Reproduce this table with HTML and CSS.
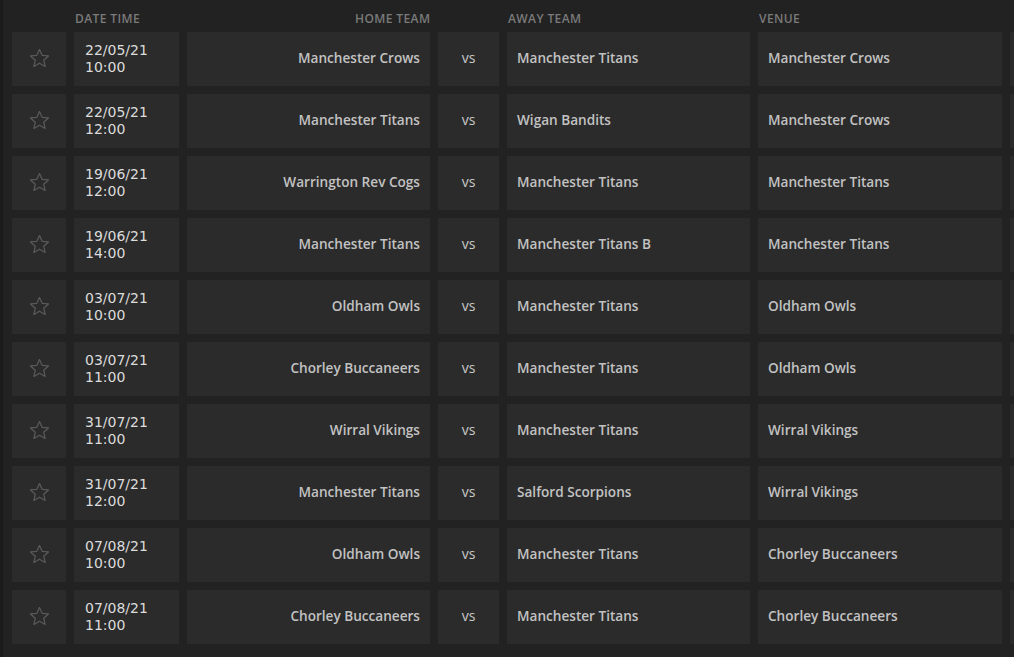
FILE: index.html
```html
<!DOCTYPE html>
<html>
<head>
<meta charset="utf-8">
<link rel="stylesheet" href="styles.css">
</head>
<body>
<div class="table">
  <div class="head"></div>
  <div class="head">Date Time</div>
  <div class="head right">Home Team</div>
  <div class="head"></div>
  <div class="head">Away Team</div>
  <div class="head">Venue</div>
  <div class="head"></div>

  <div class="cell star"><svg viewBox="0 0 24 24" width="23" height="23"><path d="M12 2.6l2.75 6.1 6.65.62-5.03 4.42 1.48 6.52L12 16.9l-5.85 3.36 1.48-6.52L2.6 9.32l6.65-.62z" fill="none" stroke="#5a5a5a" stroke-width="1.3" stroke-linejoin="round"/></svg></div>
  <div class="cell date">22/05/21<br>10:00</div>
  <div class="cell team home">Manchester Crows</div>
  <div class="cell vs">vs</div>
  <div class="cell team">Manchester Titans</div>
  <div class="cell team">Manchester Crows</div>
  <div class="cell extra"></div>

  <div class="cell star"><svg viewBox="0 0 24 24" width="23" height="23"><path d="M12 2.6l2.75 6.1 6.65.62-5.03 4.42 1.48 6.52L12 16.9l-5.85 3.36 1.48-6.52L2.6 9.32l6.65-.62z" fill="none" stroke="#5a5a5a" stroke-width="1.3" stroke-linejoin="round"/></svg></div>
  <div class="cell date">22/05/21<br>12:00</div>
  <div class="cell team home">Manchester Titans</div>
  <div class="cell vs">vs</div>
  <div class="cell team">Wigan Bandits</div>
  <div class="cell team">Manchester Crows</div>
  <div class="cell extra"></div>

  <div class="cell star"><svg viewBox="0 0 24 24" width="23" height="23"><path d="M12 2.6l2.75 6.1 6.65.62-5.03 4.42 1.48 6.52L12 16.9l-5.85 3.36 1.48-6.52L2.6 9.32l6.65-.62z" fill="none" stroke="#5a5a5a" stroke-width="1.3" stroke-linejoin="round"/></svg></div>
  <div class="cell date">19/06/21<br>12:00</div>
  <div class="cell team home">Warrington Rev Cogs</div>
  <div class="cell vs">vs</div>
  <div class="cell team">Manchester Titans</div>
  <div class="cell team">Manchester Titans</div>
  <div class="cell extra"></div>

  <div class="cell star"><svg viewBox="0 0 24 24" width="23" height="23"><path d="M12 2.6l2.75 6.1 6.65.62-5.03 4.42 1.48 6.52L12 16.9l-5.85 3.36 1.48-6.52L2.6 9.32l6.65-.62z" fill="none" stroke="#5a5a5a" stroke-width="1.3" stroke-linejoin="round"/></svg></div>
  <div class="cell date">19/06/21<br>14:00</div>
  <div class="cell team home">Manchester Titans</div>
  <div class="cell vs">vs</div>
  <div class="cell team">Manchester Titans B</div>
  <div class="cell team">Manchester Titans</div>
  <div class="cell extra"></div>

  <div class="cell star"><svg viewBox="0 0 24 24" width="23" height="23"><path d="M12 2.6l2.75 6.1 6.65.62-5.03 4.42 1.48 6.52L12 16.9l-5.85 3.36 1.48-6.52L2.6 9.32l6.65-.62z" fill="none" stroke="#5a5a5a" stroke-width="1.3" stroke-linejoin="round"/></svg></div>
  <div class="cell date">03/07/21<br>10:00</div>
  <div class="cell team home">Oldham Owls</div>
  <div class="cell vs">vs</div>
  <div class="cell team">Manchester Titans</div>
  <div class="cell team">Oldham Owls</div>
  <div class="cell extra"></div>

  <div class="cell star"><svg viewBox="0 0 24 24" width="23" height="23"><path d="M12 2.6l2.75 6.1 6.65.62-5.03 4.42 1.48 6.52L12 16.9l-5.85 3.36 1.48-6.52L2.6 9.32l6.65-.62z" fill="none" stroke="#5a5a5a" stroke-width="1.3" stroke-linejoin="round"/></svg></div>
  <div class="cell date">03/07/21<br>11:00</div>
  <div class="cell team home">Chorley Buccaneers</div>
  <div class="cell vs">vs</div>
  <div class="cell team">Manchester Titans</div>
  <div class="cell team">Oldham Owls</div>
  <div class="cell extra"></div>

  <div class="cell star"><svg viewBox="0 0 24 24" width="23" height="23"><path d="M12 2.6l2.75 6.1 6.65.62-5.03 4.42 1.48 6.52L12 16.9l-5.85 3.36 1.48-6.52L2.6 9.32l6.65-.62z" fill="none" stroke="#5a5a5a" stroke-width="1.3" stroke-linejoin="round"/></svg></div>
  <div class="cell date">31/07/21<br>11:00</div>
  <div class="cell team home">Wirral Vikings</div>
  <div class="cell vs">vs</div>
  <div class="cell team">Manchester Titans</div>
  <div class="cell team">Wirral Vikings</div>
  <div class="cell extra"></div>

  <div class="cell star"><svg viewBox="0 0 24 24" width="23" height="23"><path d="M12 2.6l2.75 6.1 6.65.62-5.03 4.42 1.48 6.52L12 16.9l-5.85 3.36 1.48-6.52L2.6 9.32l6.65-.62z" fill="none" stroke="#5a5a5a" stroke-width="1.3" stroke-linejoin="round"/></svg></div>
  <div class="cell date">31/07/21<br>12:00</div>
  <div class="cell team home">Manchester Titans</div>
  <div class="cell vs">vs</div>
  <div class="cell team">Salford Scorpions</div>
  <div class="cell team">Wirral Vikings</div>
  <div class="cell extra"></div>

  <div class="cell star"><svg viewBox="0 0 24 24" width="23" height="23"><path d="M12 2.6l2.75 6.1 6.65.62-5.03 4.42 1.48 6.52L12 16.9l-5.85 3.36 1.48-6.52L2.6 9.32l6.65-.62z" fill="none" stroke="#5a5a5a" stroke-width="1.3" stroke-linejoin="round"/></svg></div>
  <div class="cell date">07/08/21<br>10:00</div>
  <div class="cell team home">Oldham Owls</div>
  <div class="cell vs">vs</div>
  <div class="cell team">Manchester Titans</div>
  <div class="cell team">Chorley Buccaneers</div>
  <div class="cell extra"></div>

  <div class="cell star"><svg viewBox="0 0 24 24" width="23" height="23"><path d="M12 2.6l2.75 6.1 6.65.62-5.03 4.42 1.48 6.52L12 16.9l-5.85 3.36 1.48-6.52L2.6 9.32l6.65-.62z" fill="none" stroke="#5a5a5a" stroke-width="1.3" stroke-linejoin="round"/></svg></div>
  <div class="cell date">07/08/21<br>11:00</div>
  <div class="cell team home">Chorley Buccaneers</div>
  <div class="cell vs">vs</div>
  <div class="cell team">Manchester Titans</div>
  <div class="cell team">Chorley Buccaneers</div>
  <div class="cell extra"></div>
</div>
</body>
</html>
```
FILE: styles.css
```css
html, body {
  margin: 0;
  padding: 0;
  background: #222222;
  height: 100%;
  overflow: hidden;
}
body {
  border-left: 3px solid #1b1b1b;
  font-family: "Open Sans", "DejaVu Sans", sans-serif;
}
.table {
  display: grid;
  grid-template-columns: 54px 105px 243px 61px 243px 244px 1fr;
  grid-template-rows: 24px;
  grid-auto-rows: 54px;
  column-gap: 8px;
  row-gap: 8px;
  padding-left: 9px;
}
.head {
  font-size: 12px;
  letter-spacing: 0.4px;
  text-transform: uppercase;
  color: #7a7a7a;
  font-weight: 600;
  padding: 11px 0 0 1px;
  line-height: 16px;
  height: 24px;
  box-sizing: border-box;
  overflow: visible;
  white-space: nowrap;
}
.head.right {
  text-align: right;
  margin-right: -0.4px;
}
.cell {
  background: #2b2b2b;
  display: flex;
  align-items: center;
  font-size: 14px;
  overflow: hidden;
}
.star {
  justify-content: center;
  padding-bottom: 1px;
}
.star svg {
  display: block;
}
.date {
  color: #dcdcdc;
  font-family: "DejaVu Sans", sans-serif;
  font-size: 14px;
  line-height: 17px;
  padding-left: 11px;
}
.team {
  color: #c2c2c2;
  font-weight: 600;
  font-size: 13.6px;
  padding: 0 10px 3px;
  white-space: nowrap;
}
.team.home {
  justify-content: flex-end;
}
.vs {
  color: #c8c8c8;
  justify-content: center;
  padding-bottom: 3px;
}
```
